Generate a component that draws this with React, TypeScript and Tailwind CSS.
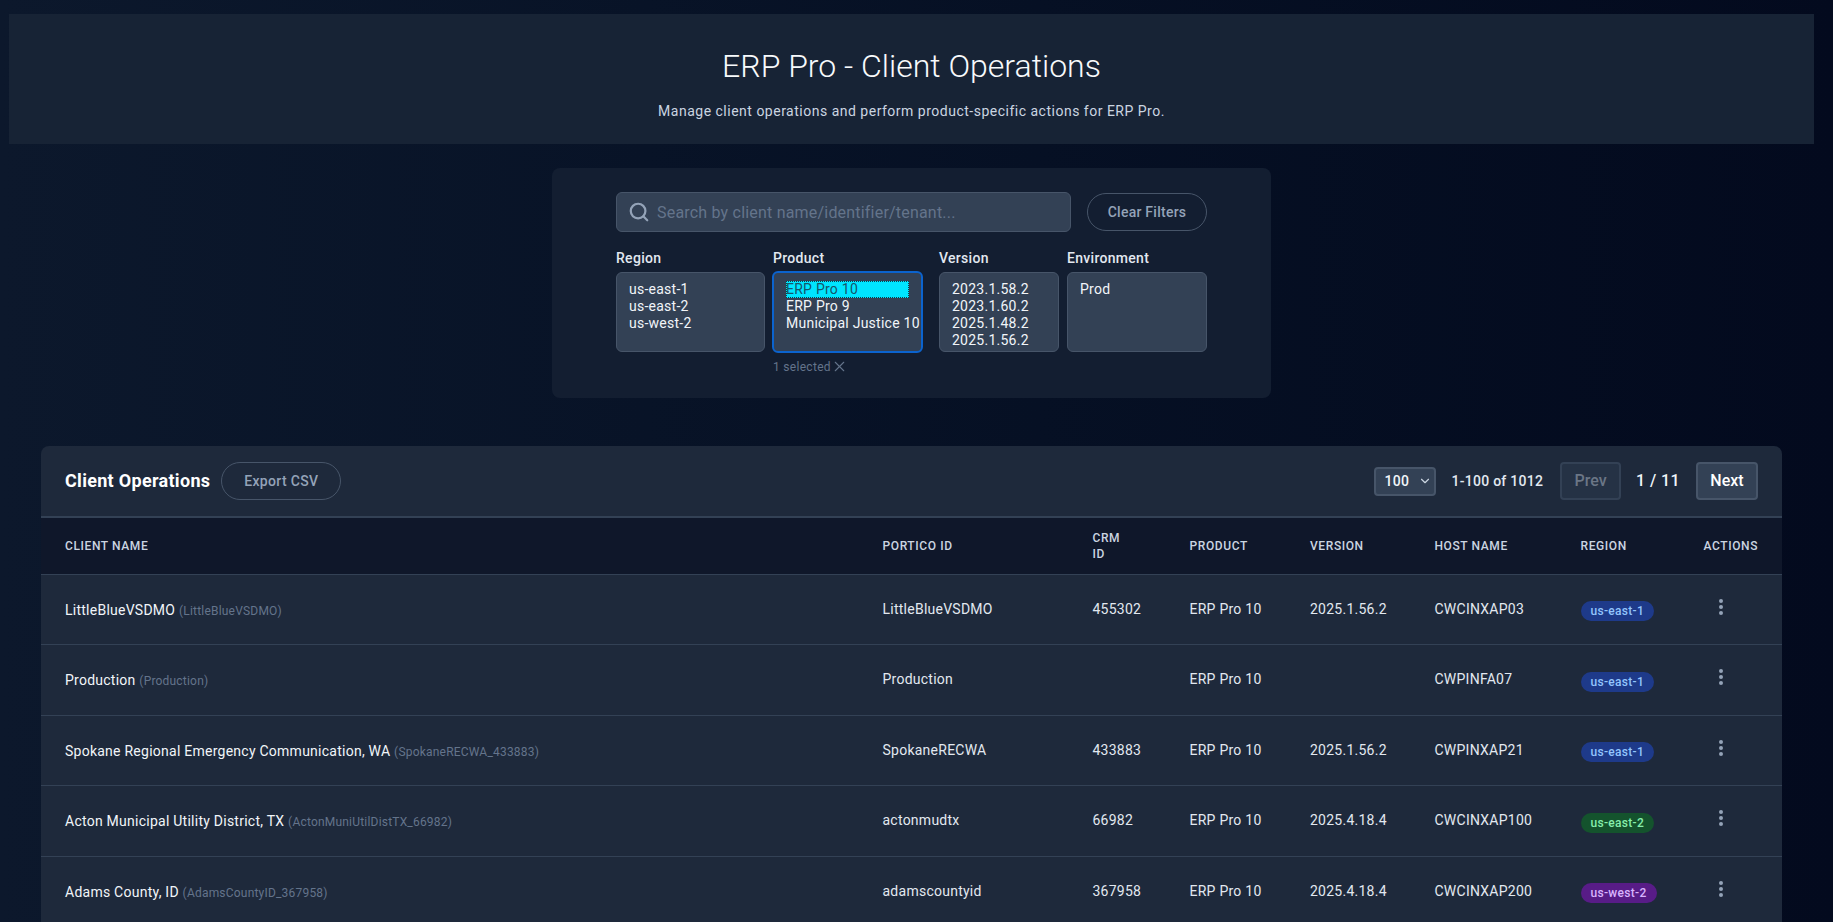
import { Search, X, ChevronDown } from 'lucide-react';
import { HiDotsVertical } from 'react-icons/hi';

type Row = {
  name: string;
  tenant: string;
  portico: string;
  crm: string;
  product: string;
  version: string;
  host: string;
  region: 'us-east-1' | 'us-east-2' | 'us-west-2';
};

const rows: Row[] = [
  { name: 'LittleBlueVSDMO', tenant: 'LittleBlueVSDMO', portico: 'LittleBlueVSDMO', crm: '455302', product: 'ERP Pro 10', version: '2025.1.56.2', host: 'CWCINXAP03', region: 'us-east-1' },
  { name: 'Production', tenant: 'Production', portico: 'Production', crm: '', product: 'ERP Pro 10', version: '', host: 'CWPINFA07', region: 'us-east-1' },
  { name: 'Spokane Regional Emergency Communication, WA', tenant: 'SpokaneRECWA_433883', portico: 'SpokaneRECWA', crm: '433883', product: 'ERP Pro 10', version: '2025.1.56.2', host: 'CWPINXAP21', region: 'us-east-1' },
  { name: 'Acton Municipal Utility District, TX', tenant: 'ActonMuniUtilDistTX_66982', portico: 'actonmudtx', crm: '66982', product: 'ERP Pro 10', version: '2025.4.18.4', host: 'CWCINXAP100', region: 'us-east-2' },
  { name: 'Adams County, ID', tenant: 'AdamsCountyID_367958', portico: 'adamscountyid', crm: '367958', product: 'ERP Pro 10', version: '2025.4.18.4', host: 'CWCINXAP200', region: 'us-west-2' },
];

const badgeColors = {
  'us-east-1': 'bg-[#1e3a8a] text-[#93c5fd]',
  'us-east-2': 'bg-[#14532d] text-[#86efac]',
  'us-west-2': 'bg-[#581c87] text-[#d8b4fe]',
};

function FilterList({ label, items, className }: { label: string; items: string[]; className: string }) {
  return (
    <div className={className}>
      <div className="mb-1 text-sm font-medium leading-5 tracking-[0.3px] text-[#e2e8f0]">{label}</div>
      <div className="h-20 overflow-hidden rounded-md border border-[#475569] bg-[#334155] px-[12px] py-2 text-sm leading-[17px] tracking-[0.25px] text-[#f1f5f9]">
        {items.map((item) => (
          <div key={item} className="whitespace-nowrap">{item}</div>
        ))}
      </div>
    </div>
  );
}

export default function App() {
  return (
    <div className="h-screen overflow-hidden bg-linear-to-r from-[#0c182c] to-[#030a1e] pr-[10px] pt-[14px] font-['Roboto',sans-serif]">
      <header className="mx-[9px] h-[130px] bg-[#172335] pt-[32px] text-center">
        <h1 className="text-[32px] font-light leading-[40px] text-[#f8fafc]">ERP Pro - Client Operations</h1>
        <p className="mt-[15px] text-sm leading-5 tracking-[0.5px] text-[#cbd5e1]">
          Manage client operations and perform product-specific actions for ERP Pro.
        </p>
      </header>

      <section className="mx-auto mt-6 h-[230px] w-[719px] rounded-lg bg-[#131e31] px-16 pt-6">
        <div className="flex items-center gap-4">
          <div className="relative w-[455px]">
            <Search strokeWidth={2.4} className="absolute left-[12px] top-[9px] h-[22px] w-[22px] text-[#94a3b8]" />
            <input
              placeholder="Search by client name/identifier/tenant..."
              className="h-10 w-full rounded-md border border-[#475569] bg-[#334155] pl-10 pr-3 text-base tracking-[0.2px] text-white outline-none placeholder:text-[#64748b]"
            />
          </div>
          <button className="h-[38px] w-[120px] rounded-full border border-[#475569] text-sm font-medium tracking-[0.25px] text-[#94a3b8]">
            Clear Filters
          </button>
        </div>

        <div className="mt-4 flex gap-2">
          <FilterList label="Region" items={['us-east-1', 'us-east-2', 'us-west-2']} className="w-[149px]" />
          <div className="w-[158px]">
            <div className="mb-1 text-sm font-medium leading-5 tracking-[0.3px] text-[#e2e8f0]">Product</div>
            <div className="-ml-px -mt-px h-[82px] w-[151px] overflow-hidden rounded-md border-2 border-[#0b63ce] bg-[#334155] px-[12px] py-2 text-sm leading-[17px] tracking-[0.25px] text-[#f1f5f9]">
              <div className="whitespace-nowrap bg-[#00e5ff] text-[#14566a] outline-1 outline-dotted -outline-offset-1 outline-[#0f3f4a]">ERP Pro 10</div>
              <div className="whitespace-nowrap">ERP Pro 9</div>
              <div className="whitespace-nowrap">Municipal Justice 10</div>
            </div>
            <div className="mt-[5px] flex items-center text-xs leading-4 tracking-[0.3px] text-[#64748b]">
              1 selected <X strokeWidth={1.5} className="h-[17px] w-[17px]" />
            </div>
          </div>
          <FilterList label="Version" items={['2023.1.58.2', '2023.1.60.2', '2025.1.48.2', '2025.1.56.2']} className="w-[120px]" />
          <FilterList label="Environment" items={['Prod']} className="w-[140px]" />
        </div>
      </section>

      <section className="mx-[41px] mt-12 rounded-t-lg bg-[#1e293b]">
        <div className="flex h-[72px] items-center justify-between border-b-2 border-[#334155] px-6">
          <div className="flex items-center gap-[11px]">
            <h2 className="text-lg font-bold tracking-[0.3px] text-white">Client Operations</h2>
            <button className="h-[38px] w-[120px] rounded-full border border-[#475569] text-sm font-medium tracking-[0.35px] text-[#94a3b8]">
              Export CSV
            </button>
          </div>
          <div className="flex items-center">
            <div className="flex h-[29px] w-[62px] items-center justify-between rounded border-2 border-[#475569] bg-[#334155] pl-[9px] pr-[2px] text-sm font-medium tracking-[0.3px] text-[#f1f5f9]">
              100
              <ChevronDown className="h-3.5 w-3.5 text-[#cbd5e1]" />
            </div>
            <span className="ml-4 text-sm font-medium tracking-[0.25px] text-[#e2e8f0]">1-100 of 1012</span>
            <button className="ml-[17px] h-[38px] w-[61px] rounded border-2 border-[#334155] bg-[#253245] text-base font-medium text-[#6b7686]">
              Prev
            </button>
            <span className="ml-[15px] text-base font-medium tracking-[0.4px] text-[#f1f5f9]">1 / 11</span>
            <button className="ml-[16px] h-[38px] w-[62px] rounded border-2 border-[#475569] bg-[#334155] text-base font-medium text-white">
              Next
            </button>
          </div>
        </div>

        <table className="w-full table-fixed border-collapse text-left">
          <thead className="bg-[#0f172a]">
            <tr className="border-b border-[#334155] text-xs font-medium uppercase leading-4 tracking-[0.6px] text-[#cbd5e1]">
              <th className="w-[817.5px] px-6 py-3 font-medium">Client Name</th>
              <th className="w-[210px] px-6 py-3 font-medium">Portico ID</th>
              <th className="w-[97px] px-6 py-3 font-medium">CRM<br />ID</th>
              <th className="w-[120.5px] px-6 py-3 font-medium">Product</th>
              <th className="w-[124.5px] px-6 py-3 font-medium">Version</th>
              <th className="w-[146px] px-6 py-3 font-medium">Host Name</th>
              <th className="w-[123px] px-6 py-3 font-medium">Region</th>
              <th className="px-6 py-3 font-medium">Actions</th>
            </tr>
          </thead>
          <tbody className="text-sm tracking-[0.25px] text-[#e2e8f0]">
            {rows.map((row) => (
              <tr key={row.name} className="border-b border-[#334155] odd:h-[70px] even:h-[71px]">
                <td className="px-6">
                  <span className="text-[#f1f5f9]">{row.name}</span>{' '}
                  <span className="text-xs tracking-[0.2px] text-[#64748b]">({row.tenant})</span>
                </td>
                <td className="px-6 pb-[2px]">{row.portico}</td>
                <td className="px-6 pb-[2px]">{row.crm}</td>
                <td className="whitespace-nowrap px-6 pb-[2px]">{row.product}</td>
                <td className="px-6 pb-[2px]">{row.version}</td>
                <td className="px-6 pb-[2px]">{row.host}</td>
                <td className="px-6">
                  <span className={`relative top-px inline-block whitespace-nowrap rounded-full px-2.5 text-xs font-medium leading-5 tracking-[0.3px] ${badgeColors[row.region]}`}>
                    {row.region}
                  </span>
                </td>
                <td className="px-6">
                  <HiDotsVertical className="relative -top-[3px] ml-[7px] h-5 w-5 text-[#94a3b8]" />
                </td>
              </tr>
            ))}
          </tbody>
        </table>
      </section>
    </div>
  );
}
